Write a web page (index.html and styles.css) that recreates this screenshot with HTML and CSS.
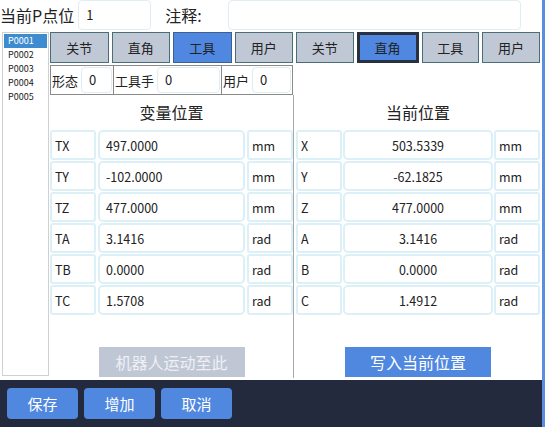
FILE: index.html
```html
<!DOCTYPE html>
<html lang="zh-CN">
<head>
  <meta charset="UTF-8">
  <title>P点位编辑</title>
  <link rel="stylesheet" href="styles.css">
</head>
<body>
  <div class="window">
    <div class="top">
      <span class="top__label">当前P点位</span>
      <div class="top__input top__input--short">1</div>
      <span class="top__label top__label--note">注释:</span>
      <div class="top__input top__input--long"></div>
    </div>

    <div class="content">
      <ul class="plist">
        <li class="plist__item plist__item--active">P0001</li>
        <li class="plist__item">P0002</li>
        <li class="plist__item">P0003</li>
        <li class="plist__item">P0004</li>
        <li class="plist__item">P0005</li>
      </ul>

      <div class="panel panel--left">
        <div class="tabs">
          <div class="tabs__item">关节</div>
          <div class="tabs__item">直角</div>
          <div class="tabs__item tabs__item--on">工具</div>
          <div class="tabs__item">用户</div>
        </div>
        <div class="info">
          <div class="info__seg info__seg--a"><span>形态</span><div class="info__input">0</div></div>
          <div class="info__seg info__seg--b"><span>工具手</span><div class="info__input">0</div></div>
          <div class="info__seg info__seg--c"><span>用户</span><div class="info__input">0</div></div>
        </div>
        <div class="panel__body panel__body--line">
          <div class="panel__title">变量位置</div>
          <div class="grid" id="varGrid"></div>
          <div class="action action--off">机器人运动至此</div>
        </div>
      </div>

      <div class="panel panel--right">
        <div class="tabs">
          <div class="tabs__item">关节</div>
          <div class="tabs__item tabs__item--focus">直角</div>
          <div class="tabs__item">工具</div>
          <div class="tabs__item">用户</div>
        </div>
        <div class="info-gap"></div>
        <div class="panel__body">
          <div class="panel__title">当前位置</div>
          <div class="grid grid--center" id="curGrid"></div>
          <div class="action">写入当前位置</div>
        </div>
      </div>
    </div>

    <div class="bottom">
      <div class="bottom__btn">保存</div>
      <div class="bottom__btn">增加</div>
      <div class="bottom__btn">取消</div>
    </div>
  </div>

  <script>
    const varRows = [
      ['TX', '497.0000', 'mm'],
      ['TY', '-102.0000', 'mm'],
      ['TZ', '477.0000', 'mm'],
      ['TA', '3.1416', 'rad'],
      ['TB', '0.0000', 'rad'],
      ['TC', '1.5708', 'rad']
    ];
    const curRows = [
      ['X', '503.5339', 'mm'],
      ['Y', '-62.1825', 'mm'],
      ['Z', '477.0000', 'mm'],
      ['A', '3.1416', 'rad'],
      ['B', '0.0000', 'rad'],
      ['C', '1.4912', 'rad']
    ];

    // 生成表格行
    function fill(id, rows) {
      const box = document.getElementById(id);
      rows.forEach(r => {
        const row = document.createElement('div');
        row.className = 'grid__row';
        row.innerHTML =
          `<div class="grid__cell grid__cell--name">${r[0]}</div>` +
          `<div class="grid__cell grid__cell--value">${r[1]}</div>` +
          `<div class="grid__cell grid__cell--unit">${r[2]}</div>`;
        box.appendChild(row);
      });
    }
    fill('varGrid', varRows);
    fill('curGrid', curRows);
  </script>
</body>
</html>
```

FILE: styles.css
```css
body {
  margin: 0;
  width: 545px;
  height: 427px;
  overflow: hidden;
  background: #fff;
  font-family: "Noto Sans CJK SC", "Noto Sans", sans-serif;
  color: #222;
}
.window {
  width: 542px;
  height: 427px;
  border-right: 3px solid #5a8ee0;
  display: flex;
  flex-direction: column;
}

/* 顶部 */
.top {
  height: 30px;
  display: flex;
  align-items: center;
}
.top__label {
  font-size: 16px;
  margin-right: 4px;
}
.top__label--note {
  margin-left: 14px;
  margin-right: 26px;
}
.top__input {
  height: 30px;
  box-sizing: border-box;
  border: 1px solid #e0eef3;
  border-radius: 4px;
  font-size: 13px;
  line-height: 28px;
  padding-left: 7px;
}
.top__input--short { width: 73px; }
.top__input--long { width: 293px; }

.content {
  height: 350px;
  display: flex;
}

/* 点位列表 */
.plist {
  list-style: none;
  margin: 2px 1px 4px 2px;
  padding: 1px;
  width: 43px;
  border: 1px solid #d0d0d0;
}
.plist__item {
  height: 14px;
  line-height: 14px;
  font-size: 9px;
  padding-left: 4px;
}
.plist__item--active {
  background: #3d8cd0;
  color: #fff;
}

.panel {
  display: flex;
  flex-direction: column;
}
.panel--left { width: 244px; }
.panel--right {
  width: 244px;
  padding: 0 2px;
}

.tabs {
  margin-top: 2px;
  height: 31px;
  display: flex;
  gap: 3px;
}
.panel--left .tabs { margin-right: 1px; }
.tabs__item {
  flex: 1;
  box-sizing: border-box;
  border: 1px solid #4a6e78;
  background: #c0c8d5;
  font-size: 13px;
  display: flex;
  align-items: center;
  justify-content: center;
}
.tabs__item--on {
  background: #5087e0;
  border-color: #3c628c;
}
.tabs__item--focus {
  background: #5087e0;
  border: 3px solid #27313f;
}

/* 形态 / 工具手 / 用户 */
.info {
  margin: 2px 1px 0 0;
  height: 30px;
  box-sizing: border-box;
  border: 1px solid #8a8a8a;
  display: flex;
  font-size: 13px;
}
.info__seg {
  display: flex;
  align-items: center;
  gap: 3px;
  padding: 0 1px;
}
.info__seg + .info__seg { border-left: 1px solid #8a8a8a; }
.info__seg--a { width: 60px; padding-left: 1px; }
.info__seg--b { width: 105px; }
.info__seg--c { flex: 1; }
.info__input {
  flex: 1;
  height: 26px;
  box-sizing: border-box;
  border: 1px solid #e0eef3;
  border-radius: 4px;
  line-height: 24px;
  padding-left: 7px;
}
.info-gap { height: 32px; }

.panel__body {
  flex: 1;
  display: flex;
  flex-direction: column;
  margin-bottom: 2px;
}
.panel__body--line { border-right: 1px solid #a8a8a8; }
.panel__title {
  height: 35px;
  line-height: 35px;
  text-align: center;
  font-size: 16px;
}

.grid {
  display: flex;
  flex-direction: column;
  gap: 1px;
}
.grid__row {
  height: 30px;
  display: flex;
  gap: 2px;
  font-size: 12.5px;
}
.grid--center .grid__row { gap: 1px; }
.grid__cell {
  box-sizing: border-box;
  border: 2px solid #dcf0f7;
  border-radius: 3px;
  display: flex;
  align-items: center;
}
.grid__cell--name { width: 46px; padding-left: 3px; }
.grid__cell--value {
  flex: 1;
  border-radius: 5px;
  padding-left: 6px;
}
.grid__cell--unit { width: 46px; padding-left: 3px; }
.grid--center .grid__cell--value {
  justify-content: center;
  padding-left: 0;
}

.action {
  margin: 32px auto 0;
  width: 146px;
  height: 30px;
  background: #5088e0;
  color: #fff;
  font-size: 16px;
  display: flex;
  align-items: center;
  justify-content: center;
}
.action--off {
  background: #c0c7d4;
  color: #eef0f6;
}

/* 底部按钮栏 */
.bottom {
  height: 47px;
  box-sizing: border-box;
  background: #232a3d;
  padding: 8px 7px;
  display: flex;
  gap: 6px;
}
.bottom__btn {
  width: 71px;
  height: 31px;
  border-radius: 4px;
  background: #5088e0;
  color: #fff;
  font-size: 15px;
  display: flex;
  align-items: center;
  justify-content: center;
}
```
